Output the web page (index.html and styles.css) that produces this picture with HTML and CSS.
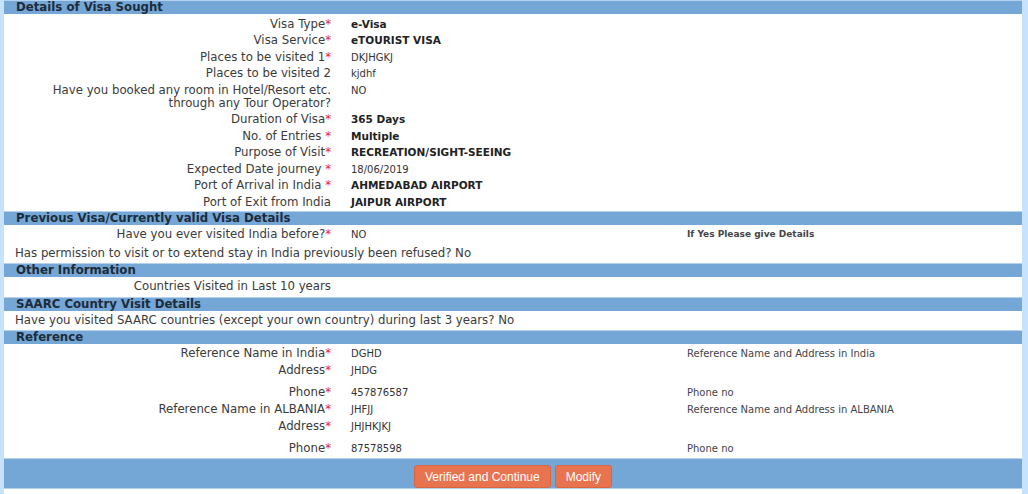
FILE: index.html
```html
<!DOCTYPE html>
<html lang="en">
<head>
    <meta charset="UTF-8">
    <title>Details of Visa Sought</title>
    <link rel="stylesheet" href="styles.css">
</head>
<body>
    <div class="page">
        <div class="section-head first">Details of Visa Sought</div>
        <div class="row lead">
            <div class="label">Visa Type<span class="req">*</span></div>
            <div class="value strong">e-Visa</div>
            <div class="note"></div>
        </div>
        <div class="row">
            <div class="label">Visa Service<span class="req">*</span></div>
            <div class="value strong">eTOURIST VISA</div>
            <div class="note"></div>
        </div>
        <div class="row">
            <div class="label">Places to be visited 1<span class="req">*</span></div>
            <div class="value">DKJHGKJ</div>
            <div class="note"></div>
        </div>
        <div class="row">
            <div class="label">Places to be visited 2</div>
            <div class="value">kjdhf</div>
            <div class="note"></div>
        </div>
        <div class="row double">
            <div class="label">Have you booked any room in Hotel/Resort etc.<br>through any Tour Operator?</div>
            <div class="value">NO</div>
            <div class="note"></div>
        </div>
        <div class="row">
            <div class="label">Duration of Visa<span class="req">*</span></div>
            <div class="value strong">365 Days</div>
            <div class="note"></div>
        </div>
        <div class="row">
            <div class="label">No. of Entries <span class="req">*</span></div>
            <div class="value strong">Multiple</div>
            <div class="note"></div>
        </div>
        <div class="row">
            <div class="label">Purpose of Visit<span class="req">*</span></div>
            <div class="value strong">RECREATION/SIGHT-SEEING</div>
            <div class="note"></div>
        </div>
        <div class="row">
            <div class="label">Expected Date journey <span class="req">*</span></div>
            <div class="value">18/06/2019</div>
            <div class="note"></div>
        </div>
        <div class="row">
            <div class="label">Port of Arrival in India <span class="req">*</span></div>
            <div class="value strong">AHMEDABAD AIRPORT</div>
            <div class="note"></div>
        </div>
        <div class="row">
            <div class="label">Port of Exit from India</div>
            <div class="value strong">JAIPUR AIRPORT</div>
            <div class="note"></div>
        </div>

        <div class="section-head">Previous Visa/Currently valid Visa Details</div>
        <div class="row roomy">
            <div class="label">Have you ever visited India before?<span class="req">*</span></div>
            <div class="value">NO</div>
            <div class="note small-bold">If Yes Please give Details</div>
        </div>
        <div class="line">Has permission to visit or to extend stay in India previously been refused? No</div>

        <div class="section-head">Other Information</div>
        <div class="row roomy">
            <div class="label">Countries Visited in Last 10 years</div>
            <div class="value"></div>
            <div class="note"></div>
        </div>

        <div class="section-head">SAARC Country Visit Details</div>
        <div class="line">Have you visited SAARC countries (except your own country) during last 3 years? No</div>

        <div class="section-head">Reference</div>
        <div class="ref-rows">
            <div class="row">
                <div class="label">Reference Name in India<span class="req">*</span></div>
                <div class="value">DGHD</div>
                <div class="note">Reference Name and Address in India</div>
            </div>
            <div class="row tall">
                <div class="label">Address<span class="req">*</span></div>
                <div class="value">JHDG</div>
                <div class="note"></div>
            </div>
            <div class="row">
                <div class="label">Phone<span class="req">*</span></div>
                <div class="value">457876587</div>
                <div class="note">Phone no</div>
            </div>
            <div class="row">
                <div class="label">Reference Name in ALBANIA<span class="req">*</span></div>
                <div class="value">JHFJJ</div>
                <div class="note">Reference Name and Address in ALBANIA</div>
            </div>
            <div class="row tall">
                <div class="label">Address<span class="req">*</span></div>
                <div class="value">JHJHKJKJ</div>
                <div class="note"></div>
            </div>
            <div class="row">
                <div class="label">Phone<span class="req">*</span></div>
                <div class="value">87578598</div>
                <div class="note">Phone no</div>
            </div>
        </div>

        <div class="actions">
            <button class="btn">Verified and Continue</button>
            <button class="btn">Modify</button>
        </div>
    </div>
</body>
</html>
```

FILE: styles.css
```css
body {
    margin: 0;
    background: #c6e2fd;
    font-family: "DejaVu Sans", Verdana, sans-serif;
    color: #3b3b3b;
}
.page {
    margin: 0 6px 0 4px;
    background: #fff;
    padding-bottom: 5px;
}
.section-head {
    background: #74a7d6;
    border-top: 1px solid #b4d2ef;
    margin-top: 1px;
    height: 13px;
    line-height: 13px;
    padding-left: 12px;
    font-size: 11.75px;
    font-weight: bold;
    color: #1d2b3a;
}
.section-head.first {
    margin-top: 0;
}
.row {
    display: grid;
    grid-template-columns: 327px 356px 1fr;
    padding-bottom: 1.5px;
}
.row.lead {
    padding-top: 1.5px;
}
.row.double {
    padding-bottom: 1.5px;
}
.row.roomy {
    padding-top: 1px;
    padding-bottom: 3px;
}
.ref-rows {
    padding-top: 1px;
}
.ref-rows .row {
    padding-bottom: 2px;
}
.ref-rows .row.tall {
    padding-bottom: 7px;
}
.label {
    text-align: right;
    font-size: 11.75px;
    line-height: 13px;
    padding-top: 2px;
}
.req {
    color: #e0262b;
}
.value {
    padding: 2px 0 0 20px;
    font-size: 10px;
    line-height: 13px;
    color: #333;
}
.note {
    padding-top: 2px;
    font-size: 10px;
    line-height: 13px;
    color: #444;
}
.strong {
    font-weight: bold;
    font-size: 10.5px;
    color: #222;
}
.small-bold {
    font-weight: bold;
    font-size: 9px;
}
.line {
    padding: 3px 0 2px 11px;
    font-size: 11.75px;
    line-height: 13px;
}
.actions {
    margin-top: 1px;
    background: #74a7d6;
    border-top: 1px solid #b4d2ef;
    border-bottom: 1px solid #b4d2ef;
    height: 29px;
    display: flex;
    justify-content: center;
    align-items: flex-end;
    gap: 4px;
}
.btn {
    background: #e8744f;
    color: #fff;
    border: 1px solid #d9653f;
    border-radius: 3px;
    height: 23px;
    padding: 0 10px;
    font-family: "Liberation Sans", Arial, sans-serif;
    font-size: 12px;
}
```
